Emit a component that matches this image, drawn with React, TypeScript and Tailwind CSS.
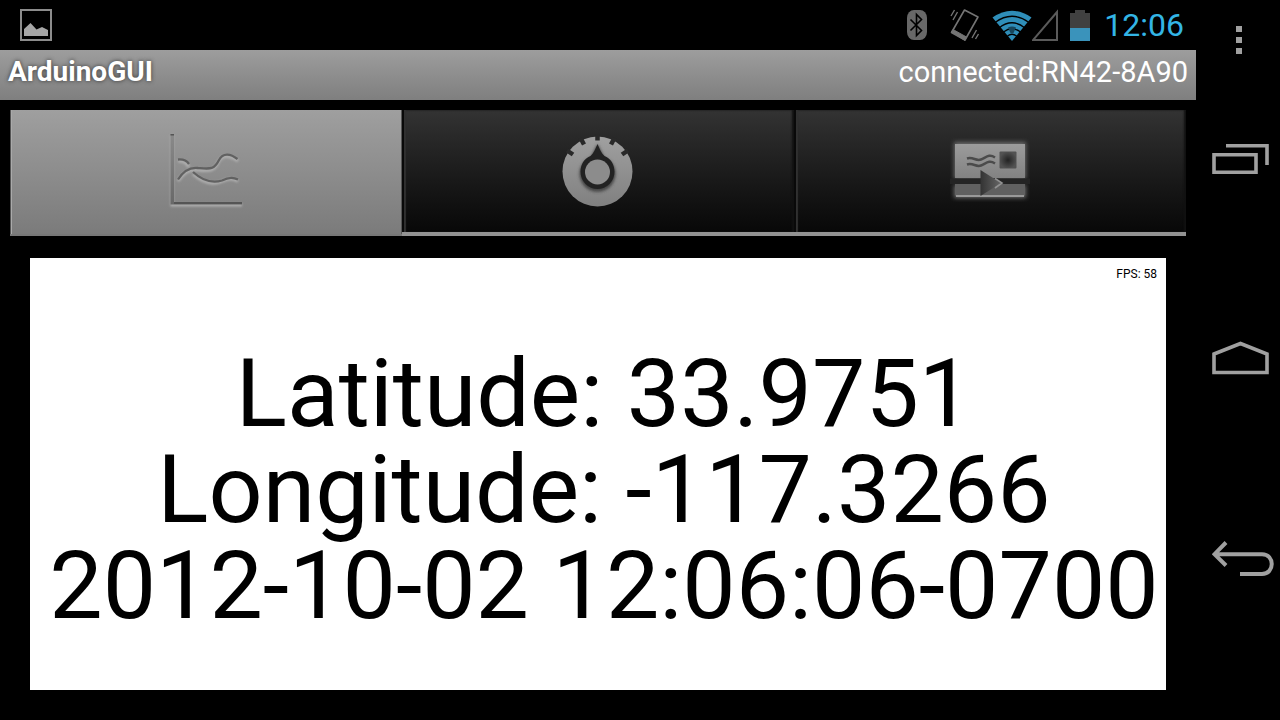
import type { ReactNode } from "react";

function PictureIcon() {
  return (
    <svg width="34" height="34" viewBox="0 0 34 34" role="img" aria-label="Screenshot captured">
      <rect x="2" y="2" width="30" height="30" fill="none" stroke="#8c8c8c" strokeWidth="2" />
      <path d="M5 28V21L11.500 15L17.500 21.500L23 19L29 22V28Z" fill="#a6a6a6" />
    </svg>
  );
}

function BluetoothIcon() {
  return (
    <svg width="22" height="32" viewBox="0 0 22 32" role="img" aria-label="Bluetooth">
      <rect x="1" y="1" width="20" height="30" rx="7" ry="8" fill="#686868" />
      <path d="M4.500 10.500L15.500 21.500L10.500 26.500V5.500L15.500 10.500L4.500 21.500" fill="none" stroke="#000" strokeWidth="1.600" />
    </svg>
  );
}

function VibrateIcon() {
  return (
    <svg width="30" height="34" viewBox="0 0 30 34" fill="none" stroke="#747474" role="img" aria-label="Vibrate">
      <path d="M14.500 2L28 9L15 32L1.500 24.500Z" strokeWidth="1.600" strokeLinejoin="round" />
      <path d="M1.500 24L3 21.500L16.500 29L15 32.500Z" fill="#747474" />
      <path d="M1 8L4.500 2M3 12L7.500 4M22 30L26.500 22M25.500 31L28.500 26" strokeWidth="1.400" />
    </svg>
  );
}

function WifiIcon() {
  return (
    <svg width="40" height="32" viewBox="0 0 40 32" role="img" aria-label="Wi-Fi">
      <path d="M0.500 8.500Q20 -5 39.500 8.500L20 32Z" fill="#2f8eb9" />
      <path d="M3 13.500Q20 1 37 13.500M7 19Q20 8.500 33 19M11.500 23Q20 16.500 28.500 23M15.500 27Q20 23.500 24.500 27" fill="none" stroke="#000" strokeWidth="1.300" />
      <path d="M16 18.500Q20 16.500 24 18.500L21.500 24H18.500Z" fill="#17465c" />
    </svg>
  );
}

function SignalIcon() {
  return (
    <svg width="28" height="32" viewBox="0 0 28 32" role="img" aria-label="No signal">
      <path d="M1 31H25V3Z" fill="none" stroke="#5a5a5a" strokeWidth="2" />
    </svg>
  );
}

function BatteryIcon() {
  return (
    <svg width="20" height="32" viewBox="0 0 20 32" role="img" aria-label="Battery">
      <path d="M0 4H5V1H15V4H20V19H0Z" fill="#404040" />
      <path d="M0 19H20V32H0Z" fill="#3a93bb" />
    </svg>
  );
}

function ChartIcon() {
  return (
    <svg width="80" height="80" viewBox="0 0 80 80" fill="none" overflow="visible" aria-hidden="true">
      <defs>
        <linearGradient id="axis" x1="0" y1="0" x2="0" y2="1">
          <stop offset="0" stopColor="#8a8a8a" />
          <stop offset="1" stopColor="#686868" />
        </linearGradient>
        <filter id="glow" x="-20%" y="-20%" width="140%" height="140%">
          <feGaussianBlur stdDeviation="0.8" />
        </filter>
      </defs>
      <g stroke="#b0b0b0" strokeWidth="3" filter="url(#glow)">
        <path d="M12 5V75H82M18 51C24 42 30 39 38 40C49 41 54 42 59 31C63 24 71 26 78 31M18 31C23 31 27 33 29 37M33 44C44 54 54 55 63 51C69 48 73 49 78 51" />
      </g>
      <path d="M10.500 4H14V72H82V74.500H10.500Z" fill="url(#axis)" />
      <path d="M10.500 4H14V5.500H10.500ZM14 72H82V74H14Z" fill="#555" />
      <path d="M18 49.500C24 40 30 37 38 38C50 39 54 40 59 30C63 22 71 24 77.500 29M18 29.500C23 29 27 31 29 34M33 42C44 52 54 53 62 50.500C69 47 73 47 78 49.500" stroke="#616161" strokeWidth="2.300" />
    </svg>
  );
}

function DialIcon() {
  return (
    <svg width="80" height="80" viewBox="0 0 80 80" aria-hidden="true">
      <defs>
        <linearGradient id="dial" x1="0" y1="0" x2="0" y2="1">
          <stop offset="0" stopColor="#a0a0a0" />
          <stop offset="1" stopColor="#808080" />
        </linearGradient>
        <filter id="dialShade" x="-20%" y="-20%" width="140%" height="140%">
          <feGaussianBlur stdDeviation="1.5" />
        </filter>
      </defs>
      <circle cx="39.500" cy="41.500" r="35" fill="url(#dial)" />
      <g stroke="#292929" strokeWidth="4.500">
        <path d="M39.500 4V10.500M22.500 8L26 14.500M56.500 8L53 14.500M9 20.500L15 24.500M70 20.500L64 24.500" />
      </g>
      <path d="M39.500 14L33 27A18 18 0 1 0 46 27Z" fill="#454545" filter="url(#dialShade)" />
      <path d="M39.500 14C37.500 18 36 23 32.500 26C25.500 29 22.500 35 22.500 42A17 17 0 0 0 56.500 42C56.500 35 53.500 29 46.500 26C43 23 41.500 18 39.500 14Z" fill="#222" />
      <circle cx="39.500" cy="42" r="12.500" fill="#8c8c8c" />
    </svg>
  );
}

function PostcardIcon() {
  return (
    <svg width="80" height="80" viewBox="0 -9 80 80" aria-hidden="true">
      <defs>
        <linearGradient id="card" x1="0" y1="0" x2="0" y2="1">
          <stop offset="0" stopColor="#9c9c9c" />
          <stop offset="1" stopColor="#828282" />
        </linearGradient>
        <radialGradient id="stamp">
          <stop offset="0" stopColor="#222" />
          <stop offset="1" stopColor="#525252" />
        </radialGradient>
        <linearGradient id="arrow" x1="0" y1="0" x2="1" y2="0">
          <stop offset="0" stopColor="#333" />
          <stop offset="1" stopColor="#666" />
        </linearGradient>
        <filter id="halo" x="-20%" y="-20%" width="140%" height="140%">
          <feGaussianBlur stdDeviation="2" />
        </filter>
      </defs>
      <path d="M4 3H76V40H4ZM4 46H76V59H4Z" fill="#6a6a6a" filter="url(#halo)" />
      <path d="M5 5H75V39H5Z" fill="url(#card)" />
      <path d="M0 39.500H80V45H0Z" fill="#242424" />
      <path d="M5 45H75V55Q75 58 72 58H8Q5 58 5 55Z" fill="#606060" />
      <path d="M6 57H74" stroke="#999" strokeWidth="2" />
      <rect x="49.500" y="12.500" width="17" height="17" rx="1" fill="url(#stamp)" />
      <path d="M17 19.500C23 17.500 26 22.500 31 20.500C36 18.500 39 14.500 45 18.500M17 25.500C23 23.500 26 28.500 31 26.500C36 24.500 39 20.500 45 24.500" fill="none" stroke="#4b4b4b" strokeWidth="2.500" />
      <path d="M30.500 31L51 44L30.500 57Z" fill="url(#arrow)" />
      <path d="M45 39.500L52 44L45 49" fill="none" stroke="#929292" strokeWidth="1.600" />
    </svg>
  );
}

function Tab({ label, selected = false, children }: { label: string; selected?: boolean; children: ReactNode }) {
  return (
    <button
      type="button"
      role="tab"
      aria-selected={selected}
      aria-label={label}
      className={
        selected
          ? "flex items-start justify-center border-b-2 border-[#777] bg-linear-to-b from-[#9f9f9f] to-[#7b7b7b] pt-5 pr-3 shadow-[inset_1px_0_0_#555,inset_2px_0_0_#aaa,inset_-1px_0_0_#555]"
          : "flex items-start justify-center border-b-4 border-[#929292] bg-linear-to-b from-[#333] to-[#080808] pt-5 shadow-[inset_2px_0_0_#090909,inset_4px_0_1px_#303030,inset_-2px_0_2px_#111]"
      }
    >
      {children}
    </button>
  );
}

export default function App() {
  return (
    <div className="flex min-h-screen overflow-hidden bg-black font-['Roboto',sans-serif]">
      <div className="flex min-w-0 flex-1 flex-col">
        <div className="flex h-[50px] items-center justify-between pr-3 pl-[19px]">
          <PictureIcon />
          <div className="flex items-center">
            <BluetoothIcon />
            <div className="ml-[22px] flex"><VibrateIcon /></div>
            <div className="ml-3 flex"><WifiIcon /></div>
            <SignalIcon />
            <div className="ml-[10px] flex"><BatteryIcon /></div>
            <time className="ml-[14px] text-[32px] leading-8 text-[#33b5e5]">12:06</time>
          </div>
        </div>

        <header className="flex h-[50px] items-start justify-between bg-linear-to-b from-[#9d9d9d] to-[#7f7f7f] px-2 pt-[6px] leading-8 text-white">
          <h1 className="text-[28px] font-bold [text-shadow:0_0_4px_#333]">ArduinoGUI</h1>
          <p className="text-[29px]">connected:RN42-8A90</p>
        </header>

        <div role="tablist" className="mx-[10px] mt-[10px] grid h-[126px] grid-cols-3">
          <Tab label="Plot" selected><ChartIcon /></Tab>
          <Tab label="Control"><DialIcon /></Tab>
          <Tab label="Send"><PostcardIcon /></Tab>
        </div>

        <main className="mx-[30px] mt-[22px] mb-[30px] flex flex-1 flex-col overflow-hidden bg-white text-black">
          <p className="pt-2 pr-[9px] text-right text-[12px] leading-4">FPS: 58</p>
          <div className="flex flex-col items-center pt-16 pl-3 text-[95px] leading-24 whitespace-nowrap">
            <p>Latitude: 33.9751</p>
            <p>Longitude: -117.3266</p>
            <p>2012-10-02 12:06:06-0700</p>
          </div>
        </main>
      </div>

      <nav className="flex w-[84px] shrink-0 flex-col pb-[62px] pl-4 text-[#a0a0a0]">
        <button type="button" aria-label="Menu" className="flex h-[58px] items-end pb-1">
          <svg width="56" height="28" viewBox="0 0 56 28" fill="currentColor">
            <path d="M24 0H30V6H24ZM24 11H30V17H24ZM24 22H30V28H24Z" />
          </svg>
        </button>
        <button type="button" aria-label="Recent apps" className="flex flex-1 items-center">
          <svg width="58" height="32" viewBox="0 0 58 32" fill="none" stroke="currentColor" strokeWidth="3.600">
            <path d="M2 12.800H44V30.200H2Z" />
            <path d="M14 3.800H55V23" />
          </svg>
        </button>
        <button type="button" aria-label="Home" className="flex flex-1 items-center">
          <svg width="58" height="34" viewBox="0 0 58 34" fill="none" stroke="currentColor" strokeWidth="3.600">
            <path d="M2 13L28.500 2.500L55 13V31.500H2Z" />
          </svg>
        </button>
        <button type="button" aria-label="Back" className="flex flex-1 items-center">
          <svg width="62" height="36" viewBox="0 0 62 36" fill="none" stroke="currentColor" strokeWidth="4">
            <path d="M14 2.500L2.500 14.200L14 25.500M3 14.200H50C63 14.200 63 34 50 34H28" />
          </svg>
        </button>
      </nav>
    </div>
  );
}
